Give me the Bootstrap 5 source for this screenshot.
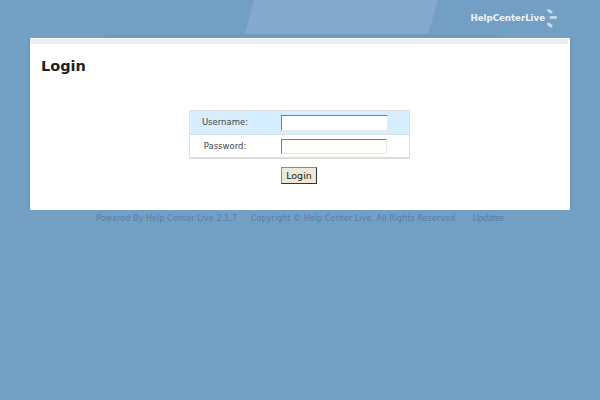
<!DOCTYPE html>
<html lang="en">
<head>
<meta charset="utf-8">
<title>Login</title>
<link href="https://cdn.jsdelivr.net/npm/bootstrap@5.3.0/dist/css/bootstrap.min.css" rel="stylesheet">
<style>
html,body{height:100%}
body{background:#749fc4;font-family:"DejaVu Sans",Verdana,sans-serif;font-size:9px;color:#333;overflow:hidden}
.top-bar{height:38px;position:relative}
.top-shape{position:absolute;left:0;top:0;width:600px;height:38px}
.brand-row{position:relative;height:38px;padding:8px 42px 0 0}
.brand-text{color:#eef4f9;font-size:8.6px;font-weight:700;line-height:20px}
.brand-mark{margin-left:1px}
.panel-box{margin:0 30px;height:172px;background:#fff;box-shadow:-2px 0 0 #6b97bc,2px 0 0 #6b97bc}
.panel-strip{height:6px;margin-right:2px;border-top:1px solid #fff;background:#e8f0f5}
.page-title{font-size:14.5px;font-weight:700;color:#222;margin:0;padding:12px 11px 0;line-height:20px}
.form-wrap{width:221px;margin:34px 0 0 159px}
.field-box{border:1px solid #dedede;border-bottom:2px solid #dcdcdc}
.field-row{height:22px}
.field-row-blue{background:#d6eeff;border-bottom:1px solid #cfe3ef;height:24px}
.field-label{width:70px;margin-right:21px;color:#444;font-size:8.5px;text-align:center}
.field-input{width:107px;height:16px;padding:0;background:#fff;border:1px solid #eee8dc;border-top-color:#7f7f70;border-left-color:#7f7f70;border-radius:0;box-shadow:none}
.field-input-sm{width:106px;height:15px;background:#fffefa}
.btn-row{margin-top:8px;padding-left:92px}
.login-btn{font-family:"DejaVu Sans",Verdana,sans-serif;font-size:9.5px;line-height:1;width:36px;height:17px;padding:0;color:#222;background:#ece9d8;border:1px solid #333;border-top-color:#888;border-left-color:#888;border-radius:0}
.foot-line{color:#4f7fab;font-size:8px;letter-spacing:.06px;padding:4px 0 0 96px;line-height:10px;white-space:nowrap}
.foot-copy{margin-left:14px}
.foot-link{color:#4f7fab;font-style:italic;text-decoration:none;margin-left:15px;letter-spacing:-.3px}
</style>
</head>
<body>
<header class="top-bar">
  <svg class="top-shape" viewBox="0 0 600 38" aria-hidden="true">
    <polygon points="254,0 438,0 428,34 245,34" fill="#84a9cc"/>
    <rect x="105" y="34" width="392" height="4" fill="#6d9abf"/>
  </svg>
  <div class="brand-row d-flex justify-content-end align-items-start">
    <span class="brand-text">HelpCenterLive</span>
    <svg class="brand-mark" width="12" height="20" viewBox="0 0 12 20" aria-hidden="true">
      <g stroke="#c4d8e8" stroke-width="3" stroke-linecap="round" fill="none">
        <path d="M2.5 2.5 L5 4"/><path d="M5 9.5 H9.5"/><path d="M2.5 16 L5 18"/>
      </g>
    </svg>
  </div>
</header>
<main class="panel-box">
  <div class="panel-strip"></div>
  <h1 class="page-title">Login</h1>
  <form class="form-wrap">
    <div class="field-box">
      <div class="field-row field-row-blue d-flex align-items-center">
        <label class="field-label" for="u">Username:</label>
        <input class="field-input" id="u" type="text">
      </div>
      <div class="field-row d-flex align-items-center">
        <label class="field-label" for="p">Password:</label>
        <input class="field-input field-input-sm" id="p" type="password">
      </div>
    </div>
    <div class="btn-row">
      <button class="login-btn" type="button">Login</button>
    </div>
  </form>
</main>
<footer class="foot-line d-flex">
  <span>Powered By Help Center Live 2.1.7</span>
  <span class="foot-copy">Copyright © Help Center Live. All Rights Reserved.</span>
  <a class="foot-link" href="#">Updates</a>
</footer>
<script src="https://cdn.jsdelivr.net/npm/bootstrap@5.3.0/dist/js/bootstrap.bundle.min.js"></script>
</body>
</html>
